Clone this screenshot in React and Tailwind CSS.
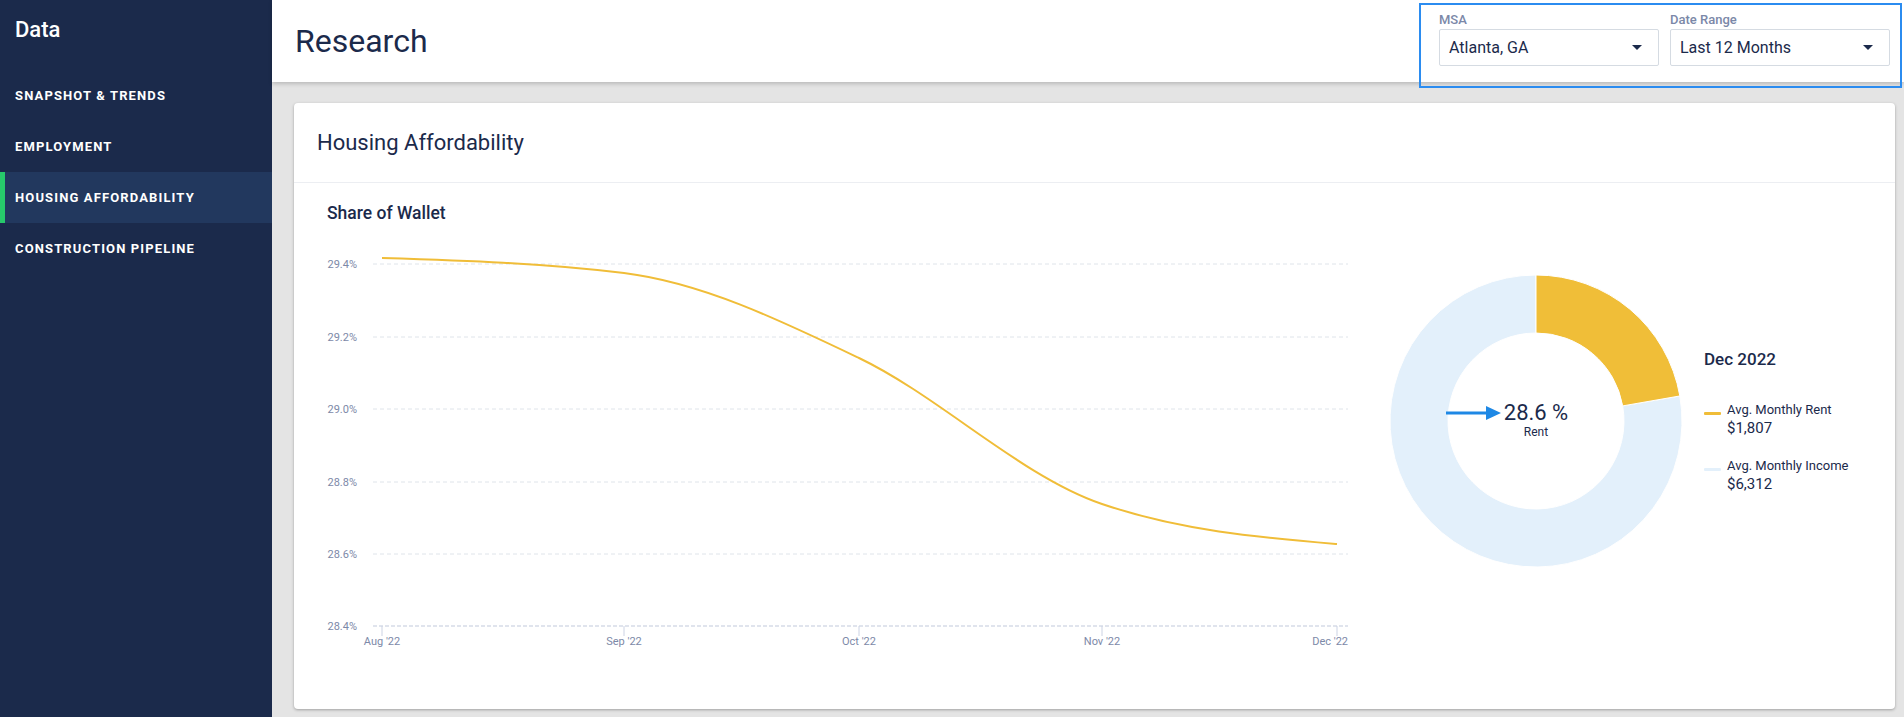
import React from "react";

const navItems = [
  { label: "SNAPSHOT & TRENDS" },
  { label: "EMPLOYMENT" },
  { label: "HOUSING AFFORDABILITY", active: true },
  { label: "CONSTRUCTION PIPELINE" },
];

function Caret() {
  return (
    <svg width="10" height="5" viewBox="0 0 10 5">
      <path d="M0 0 L10 0 L5 5 Z" fill="#1b2a4b" />
    </svg>
  );
}

function Select({ label, value }) {
  return (
    <div className="flex flex-col w-[220px]">
      <div className="text-[13px] leading-[15px] font-medium text-[#7b88a8]">{label}</div>
      <div className="mt-[2px] h-[37px] border border-[#d5dbe2] rounded-[2px] flex items-center justify-between pl-[9px] pr-[16px] bg-white">
        <span className="text-[16px] text-[#1b2a4b]">{value}</span>
        <Caret />
      </div>
    </div>
  );
}

function LineChart() {
  const gridY = [
    { y: 264, label: "29.4%" },
    { y: 337, label: "29.2%" },
    { y: 409, label: "29.0%" },
    { y: 482, label: "28.8%" },
    { y: 554, label: "28.6%" },
  ];
  const ticks = [
    { x: 382, label: "Aug '22", anchor: "middle" },
    { x: 624, label: "Sep '22", anchor: "middle" },
    { x: 859, label: "Oct '22", anchor: "middle" },
    { x: 1102, label: "Nov '22", anchor: "middle" },
    { x: 1337, label: "Dec '22", anchor: "end", tx: 1348 },
  ];
  const path =
    "M382 258 C462.67 260.5 543.33 263 624 273 C702.33 282.7 780.67 320.5 859 358 C940 396.8 1021 476.4 1102 504 C1180.33 530.7 1258.67 537.3 1337 544";
  return (
    <svg width="1060" height="430" viewBox="310 230 1060 430" className="block">
      {gridY.map((g) => (
        <g key={g.label}>
          <line x1="373" x2="1348" y1={g.y} y2={g.y} stroke="#dfe4ea" strokeWidth="1" strokeDasharray="4 3" />
          <text x="357" y={g.y + 4} textAnchor="end" fontSize="11" fill="#7d89a8" fontFamily="Roboto, sans-serif">
            {g.label}
          </text>
        </g>
      ))}
      <line x1="373" x2="1348" y1="626" y2="626" stroke="#d6dbe8" strokeWidth="1.5" strokeDasharray="4 2" />
      <text x="357" y="630" textAnchor="end" fontSize="11" fill="#7d89a8" fontFamily="Roboto, sans-serif">
        28.4%
      </text>
      {ticks.map((t) => (
        <g key={t.label}>
          <line x1={t.x} x2={t.x} y1="626" y2="636" stroke="#ccd3e4" strokeWidth="1" />
          <text
            x={t.tx || t.x}
            y="645"
            textAnchor={t.anchor}
            fontSize="11"
            fill="#7d89a8"
            fontFamily="Roboto, sans-serif"
          >
            {t.label}
          </text>
        </g>
      ))}
      <path d={path} fill="none" stroke="#f0bd38" strokeWidth="2" />
    </svg>
  );
}

function Donut() {
  const cx = 1536;
  const cy = 421;
  const ro = 146;
  const ri = 88;
  const frac = 1807 / (1807 + 6312);
  const a = frac * 2 * Math.PI;
  const pt = (r, ang) => [cx + r * Math.sin(ang), cy - r * Math.cos(ang)];
  const [ox1, oy1] = pt(ro, 0);
  const [ox2, oy2] = pt(ro, a);
  const [ix2, iy2] = pt(ri, a);
  const [ix1, iy1] = pt(ri, 0);
  const yellow = `M${ox1} ${oy1} A${ro} ${ro} 0 0 1 ${ox2} ${oy2} L${ix2} ${iy2} A${ri} ${ri} 0 0 0 ${ix1} ${iy1} Z`;
  const blue = `M${ox2} ${oy2} A${ro} ${ro} 0 1 1 ${ox1} ${oy1} L${ix1} ${iy1} A${ri} ${ri} 0 1 0 ${ix2} ${iy2} Z`;
  return (
    <svg width="296" height="296" viewBox="1388 273 296 296" className="block shrink-0">
      <path d={blue} fill="#e3f0fb" stroke="#ffffff" strokeWidth="1" />
      <path d={yellow} fill="#f0be38" stroke="#ffffff" strokeWidth="1" />
      <text x={cx} y="420" textAnchor="middle" fontSize="22" fill="#1b2a4b" fontFamily="Roboto, sans-serif">
        28.6 %
      </text>
      <text x={cx} y="436" textAnchor="middle" fontSize="12" fill="#1b2a4b" fontFamily="Roboto, sans-serif">
        Rent
      </text>
      <line x1="1446" y1="413" x2="1488" y2="413" stroke="#1e88e5" strokeWidth="3" />
      <path d="M1486 406 L1501 413 L1486 420 Z" fill="#1e88e5" />
    </svg>
  );
}

function LegendItem({ color, label, value }) {
  return (
    <div className="flex items-start">
      <div className="w-[17px] h-[3px] mt-[10px] rounded-[1px]" style={{ backgroundColor: color }} />
      <div className="ml-[6px] flex flex-col">
        <span className="text-[13px] leading-[16px] text-[#1b2a4b]">{label}</span>
        <span className="text-[15px] leading-[18px] text-[#1b2a4b] mt-[1px]">{value}</span>
      </div>
    </div>
  );
}

export default function App() {
  return (
    <div className="flex w-full h-[717px] bg-[#e4e4e4] font-[Roboto,sans-serif] overflow-hidden">
      <aside className="w-[272px] shrink-0 bg-[#1b2a4b] flex flex-col">
        <div className="h-[70px] pl-[15px] pt-[17px] text-[22px] leading-[26px] font-medium text-white">Data</div>
        {navItems.map((item) => (
          <div
            key={item.label}
            className={
              item.active
                ? "h-[51px] flex items-center bg-[#22385e] border-l-[5px] border-[#27c96b] pl-[10px]"
                : "h-[51px] flex items-center pl-[15px]"
            }
          >
            <span className="text-[13px] font-bold tracking-[1.13px] text-white">{item.label}</span>
          </div>
        ))}
      </aside>
      <main className="flex-1 flex flex-col min-w-0">
        <header className="relative z-10 h-[82px] shrink-0 bg-white shadow-[0_2px_4px_rgba(0,0,0,0.18)] flex items-start justify-between">
          <h1 className="self-center pl-[23px] text-[32px] leading-none text-[#1b2a4b]">Research</h1>
          <div className="mt-[3px] mr-[2px] w-[483px] h-[85px] shrink-0 border-2 border-[#2b8cf0] pt-[7px] pl-[18px] flex gap-[11px]">
            <Select label="MSA" value="Atlanta, GA" />
            <Select label="Date Range" value="Last 12 Months" />
          </div>
        </header>
        <div className="flex-1 pl-[22px] pr-[9px] pt-[21px]">
          <section className="h-[606px] bg-white rounded-[4px] shadow-[0_1px_3px_rgba(0,0,0,0.3)] flex flex-col">
            <div className="h-[80px] shrink-0 border-b border-[#eceef2] flex items-center pl-[23px]">
              <h2 className="text-[22px] text-[#1b2a4b]">Housing Affordability</h2>
            </div>
            <div className="flex">
              <div className="w-[1088px] shrink-0 flex flex-col pt-[20px]">
                <h3 className="pl-[33px] text-[17.5px] leading-[20px] font-medium text-[#1b2a4b]">Share of Wallet</h3>
                <div className="mt-[7px] ml-[16px]">
                  <LineChart />
                </div>
              </div>
              <div className="flex pt-[90px]">
                <div className="ml-[6px]">
                  <Donut />
                </div>
                <div className="ml-[20px] mt-[76px] flex flex-col">
                  <div className="text-[17px] leading-[20px] font-medium text-[#1b2a4b]">Dec 2022</div>
                  <div className="mt-[33px]">
                    <LegendItem color="#f0bd38" label="Avg. Monthly Rent" value="$1,807" />
                  </div>
                  <div className="mt-[21px]">
                    <LegendItem color="#e3f0fb" label="Avg. Monthly Income" value="$6,312" />
                  </div>
                </div>
              </div>
            </div>
          </section>
        </div>
      </main>
    </div>
  );
}
